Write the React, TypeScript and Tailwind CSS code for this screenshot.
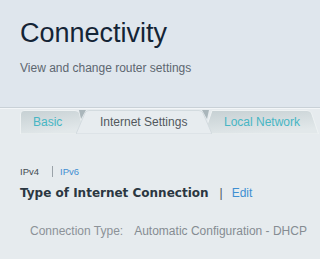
import React from 'react'

type TabProps = {
  id: string
  label: string
  width: number
  active?: boolean
  path: string
  textOffset: number
  className?: string
}

function Tab({ id, label, width, active, path, textOffset, className }: TabProps) {
  return (
    <div
      className={`relative h-6 flex items-center shrink-0 ${className ?? ''}`}
      style={{ width }}
    >
      <svg
        className="absolute inset-0"
        width={width}
        height={24}
        viewBox={`0 0 ${width} 24`}
      >
        <defs>
          <linearGradient id={`tab-${id}`} x1="0" y1="0" x2="0.4" y2="1">
            <stop offset="0" stopColor="#c6d0d3" />
            <stop offset="1" stopColor="#e2e8ea" />
          </linearGradient>
        </defs>
        {active ? (
          <>
            <path d="M3 0 L10 0 L5 9 Z" fill="#aab6bb" />
            <path d={`M${width - 10} 0 L${width - 3} 0 L${width - 5} 9 Z`} fill="#aab6bb" />
            <path d={path} fill="#e7ecef" stroke="#d3dbdf" strokeWidth="1" />
          </>
        ) : (
          <path d={path} fill={`url(#tab-${id})`} stroke="#eef2f3" strokeWidth="1" />
        )}
      </svg>
      <span
        className={`relative whitespace-nowrap text-[12px] leading-none ${active ? 'text-[#52585d]' : 'text-[#47b6c4]'}`}
        style={{ marginLeft: textOffset }}
      >
        {label}
      </span>
    </div>
  )
}

export default function App() {
  return (
    <div className="w-[320px] h-[259px] overflow-hidden bg-[#e6ebee] font-['Liberation_Sans',Arial,sans-serif]">
      {/* header */}
      <div className="h-[107px] bg-[#dfe6ed] px-5 pt-5">
        <h1 className="text-[27px] leading-[27px] text-[#142436]">Connectivity</h1>
        <p className="mt-[15px] text-[12px] leading-none text-[#5d6670]">
          View and change router settings
        </p>
      </div>
      <div className="h-px bg-[#c9d1d7]" />
      <div className="h-px bg-[#f3f6f8]" />

      {/* tabs */}
      <div className="mt-px flex pl-5">
        <Tab
          id="basic"
          label="Basic"
          width={64}
          path="M0.5 24 L0.5 4 Q0.5 0.5 4 0.5 L55 0.5 Q58 0.5 59.5 3 L64 24 Z"
          textOffset={13}
        />
        <Tab
          id="internet"
          label="Internet Settings"
          width={136}
          active
          path="M0 24 L9 3 Q10.5 0.5 13 0.5 L123 0.5 Q125.5 0.5 127 3 L136 24 Z"
          textOffset={24}
          className="-ml-2 z-10"
        />
        <Tab
          id="local"
          label="Local Network"
          width={115}
          path="M0 24 L8 0.5 L103 0.5 Q106 0.5 107.5 3 L114.5 24 Z"
          textOffset={20}
          className="-ml-2"
        />
      </div>

      {/* content */}
      <div className="px-5 whitespace-nowrap">
        <div className="mt-8 flex items-center text-[9.5px] leading-none">
          <span className="text-[#444b52]">IPv4</span>
          <span className="ml-[13px] h-[11px] w-px bg-[#9aa2a8]" />
          <span className="ml-[7px] text-[#3f8fd2]">IPv6</span>
        </div>
        <div className="mt-[10px] flex items-center leading-none">
          <span className="font-['DejaVu_Sans',Verdana,sans-serif] text-[12px] font-bold text-[#2b3741]">
            Type of Internet Connection
          </span>
          <span className="ml-[11px] text-[12px] text-[#4a5560]">|</span>
          <span className="ml-[9px] text-[12px] text-[#3f8fd2]">Edit</span>
        </div>
        <div className="mt-[26px] pl-[10px] flex text-[12px] leading-none text-[#8c9298]">
          <span className="shrink-0">Connection Type:</span>
          <span className="ml-[11px] shrink-0 text-[#858c92]">Automatic Configuration - DHCP</span>
        </div>
      </div>
    </div>
  )
}
